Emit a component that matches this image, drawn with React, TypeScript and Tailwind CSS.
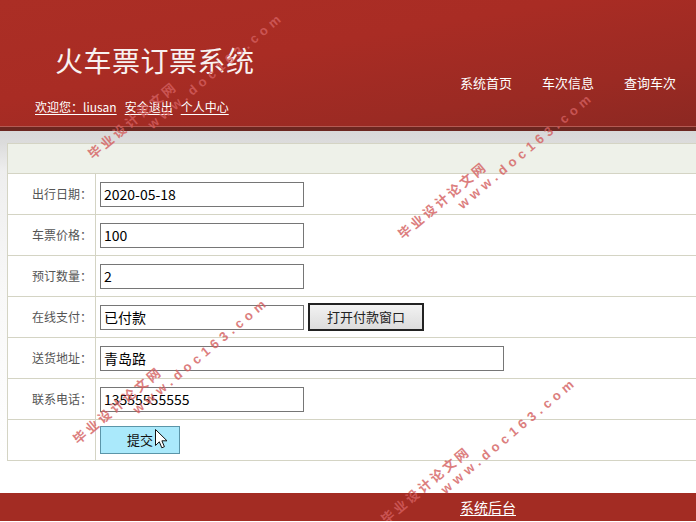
import React from 'react';

const rows: { label: string; value: string; wide?: boolean; pay?: boolean }[] = [
  { label: '出行日期：', value: '2020-05-18' },
  { label: '车票价格：', value: '100' },
  { label: '预订数量：', value: '2' },
  { label: '在线支付：', value: '已付款', pay: true },
  { label: '送货地址：', value: '青岛路', wide: true },
  { label: '联系电话：', value: '13555555555' },
];

function Watermark({ className }: { className: string }) {
  return (
    <div className={`absolute origin-[0_16px] -rotate-[40deg] text-[#d45f5f] opacity-80 ${className}`}>
      <div className="whitespace-nowrap text-[13px] leading-[16px] font-bold tracking-[3px]">毕业设计论文网</div>
      <div className="ml-[65px] whitespace-nowrap text-[13px] leading-[16px] font-bold tracking-[4.6px] font-['Liberation_Sans',sans-serif]">
        www.doc163.com
      </div>
    </div>
  );
}

export default function App() {
  return (
    <div className="relative w-full overflow-hidden bg-white font-['Noto_Sans_CJK_SC','Noto_Sans',sans-serif]">
      <header className="relative flex h-[127px] justify-between bg-[linear-gradient(170deg,#ab2e25_0%,#a92c24_40%,#9b2a23_75%,#8c2822_100%)]">
        <div className="pl-[35px] pt-[43px]">
          <div className="pl-[20px] text-[28px] leading-[34px] tracking-[0.5px] text-[#f8f2f1]">火车票订票系统</div>
          <div className="mt-[21px] flex gap-[8px] text-[12px] leading-[18px] text-white">
            <a className="underline underline-offset-2">欢迎您：liusan</a>
            <a className="underline underline-offset-2">安全退出</a>
            <a className="underline underline-offset-2">个人中心</a>
          </div>
        </div>
        <nav className="flex gap-[30px] pr-[20px] pt-[74px] text-[13px] leading-[18px] text-white">
          <a>系统首页</a>
          <a>车次信息</a>
          <a>查询车次</a>
        </nav>
        <div className="absolute bottom-0 left-0 right-0 h-px bg-[#b45a53]" />
      </header>
      <div className="h-[4px] bg-[#6c2620]" />
      <main className="bg-[linear-gradient(#d8d8d8_0px,#dcdcdc_12px,#eeeeee_40px,#f8f8f8_160px,#ffffff_330px)] pb-[32px] pl-[7px] pt-[12px]">
        <div className="border-l border-t border-[#d4d4c4]">
          <div className="h-[30px] border-b border-[#d4d4c4] bg-[#eef1e9]" />
          {rows.map((r) => (
            <div key={r.label} className="flex h-[41px] border-b border-[#d4d4c4] bg-white">
              <div className="flex w-[88px] items-center justify-end border-r border-[#d4d4c4] pr-[3px] text-[12px] text-[#555]">
                {r.label}
              </div>
              <div className="flex items-center pl-[4px]">
                <input
                  readOnly
                  defaultValue={r.value}
                  className={`h-[25px] border border-[#767676] bg-white px-[3px] text-[14px] text-black outline-none ${r.wide ? 'w-[404px]' : 'w-[204px]'}`}
                />
                {r.pay && (
                  <button className="ml-[4px] h-[28px] w-[116px] border-2 border-[#222] bg-[linear-gradient(#f2f2f2,#dcdcdc)] text-[13px] text-[#222]">
                    打开付款窗口
                  </button>
                )}
              </div>
            </div>
          ))}
          <div className="flex h-[41px] border-b border-[#d4d4c4] bg-white">
            <div className="w-[88px] border-r border-[#d4d4c4]" />
            <div className="flex items-center pl-[4px]">
              <div className="relative">
                <button className="h-[28px] w-[80px] border border-[#5b95a8] bg-[#aae9fb] text-[13px] text-[#111]">提交</button>
                <svg className="absolute left-[55px] top-[3px]" width="13" height="20" viewBox="0 0 13 20">
                  <path d="M0.5 0.5 L0.5 16.5 L4.3 12.8 L6.8 18.8 L9.4 17.7 L6.9 11.8 L12 11.8 Z" fill="#fff" stroke="#111" strokeWidth="1" strokeLinejoin="miter" />
                </svg>
              </div>
            </div>
          </div>
        </div>
      </main>
      <footer className="flex h-[28px] items-center bg-[#a32c23] pl-[460px]">
        <a className="text-[14px] leading-[18px] text-white underline underline-offset-2">系统后台</a>
      </footer>
      <div className="pointer-events-none absolute inset-0">
        <Watermark className="left-[95px] top-[146px]" />
        <Watermark className="left-[405px] top-[226px]" />
        <Watermark className="left-[80px] top-[431px]" />
        <Watermark className="left-[388px] top-[511px]" />
      </div>
    </div>
  );
}
